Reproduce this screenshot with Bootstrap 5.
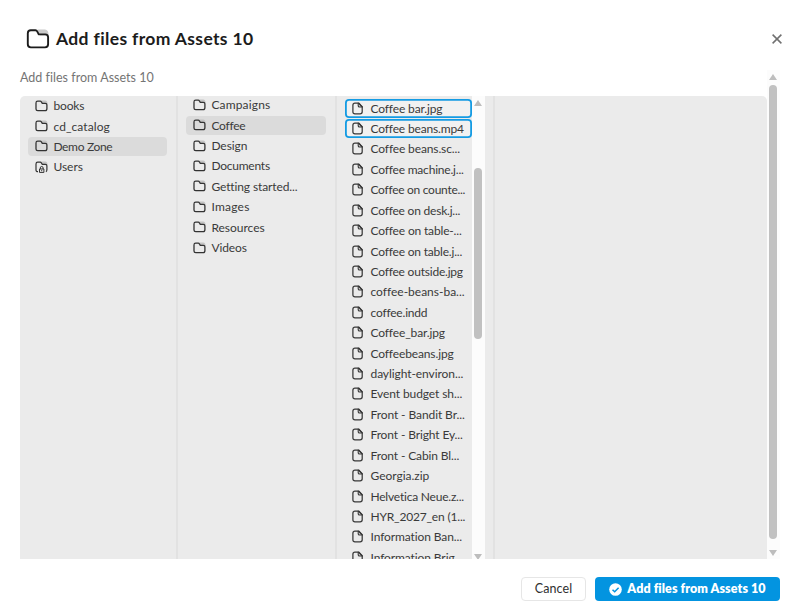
<!DOCTYPE html>
<html lang="en">
<head>
<meta charset="utf-8">
<meta name="viewport" content="width=device-width, initial-scale=1">
<title>Add files from Assets 10</title>
<link href="https://cdn.jsdelivr.net/npm/bootstrap@5.3.0/dist/css/bootstrap.min.css" rel="stylesheet">
<style>
body{font-family:Lato,"Open Sans",sans-serif;color:#3a3a3a;background:#fff;height:616px;overflow:hidden}
.dialog-head{height:70px;padding:8px 17px 0 26px}
.dialog-title{font-size:17.5px;font-weight:700;color:#1c1c1c;line-height:24px;letter-spacing:.36px;margin-left:6px}
.close-btn{width:12px;height:12px}
.dialog-body{height:489px;padding-left:20px}
.main-pane{width:747px}
.crumb{font-size:12.5px;line-height:16px;height:26px;color:#747474;letter-spacing:.02px}
.browser{height:463px;background:#ebebeb;border-radius:5px 5px 0 0}
.pane{border-right:2px solid #e2e2e2;flex:none}
.pane-a{width:158px;padding:0 9px 0 8px}
.pane-b{width:159px;padding:0 9px 0 8px}
.pane-c{width:157.5px}
.files{width:127px;margin-left:8px;padding-top:1.9px;height:463px}
.shift-a{margin-top:-.6px}
.shift-b{margin-top:-1.5px}
.entry{height:20.43px;padding:.7px 0}
.entry-in{height:19px;border-radius:4px;font-size:12px;line-height:19px;padding-left:6.8px}
.entry-in.chosen{background:#dbdbdb}
.entry-in svg{flex:none}
.entry-in span{margin-left:5.6px}
.files .entry-in{padding-left:7.4px}
.files .entry-in.marked{background:#f1f1f1;box-shadow:inset 0 0 0 1.8px #149be3}
.files .entry-in span{margin-left:7.1px}
.track{background:#fcfcfc;width:12.5px}
.thumb{width:8px;background:#c1c1c1;border-radius:4px}
.arrow-up,.arrow-down{width:0;height:0;border:4.5px solid transparent;border-top-width:0;border-bottom:6px solid #bdbdbd}
.arrow-down{border-top:6px solid #bdbdbd;border-bottom-width:0}
.col-track .arrow-up{margin-top:3.5px}
.col-track .thumb{height:171px;margin-top:62.500px}
.col-track .arrow-down{margin-bottom:-1px}
.page-track{padding:3.5px 0 3px}
.page-track .thumb{height:454px;margin-top:5.5px}
.dialog-foot{padding:18px 20.5px 0 0;gap:9px}
.dialog-foot .btn{height:24px;font-size:12.5px;line-height:14px;padding:0;border-radius:4px}
.btn-cancel{width:65px;border:1.5px solid #e6e6e6;color:#303030;background:#fff}
.dialog-foot .btn-cancel{letter-spacing:.1px}
.btn-add{width:184.5px;background:#0394e0;color:#fff;font-weight:800;border:0}
.dialog-foot .btn-add{letter-spacing:.08px}
.btn-add span{margin-left:5.5px}
</style>
<script src="https://cdn.jsdelivr.net/npm/bootstrap@5.3.0/dist/js/bootstrap.bundle.min.js"></script>
</head>
<body>
<svg class="d-none">
  <symbol id="folder" viewBox="0 0 13 12"><path d="M6.500.500h3.700q2.300 0 2.400 3.500H8z" fill="#c4c4c4"/><path d="M2.800 1.100h2.500q.7 0 1.100.8l.9 1.400h3q1.600 0 1.600 1.500v4q0 1.900-1.900 1.900H2.800Q1 10.700 1 8.900V2.900Q1 1.100 2.800 1.100z" fill="none" stroke="#333" stroke-width="1.300" stroke-linejoin="round"/></symbol>
  <symbol id="userfolder" viewBox="0 0 13 12"><path d="M6.500.500h3.700q2.300 0 2.400 3.500H8z" fill="#c4c4c4"/><path d="M3 10.700Q1 10.700 1 8.900V2.900Q1 1.100 2.800 1.100h2.500q.7 0 1.100.8l.9 1.400h3q1.600 0 1.600 1.500v4q0 1.500-1 1.900" fill="none" stroke="#333" stroke-width="1.200"/><path d="M5.300 8V6.900q0-1.400 1.400-1.400t1.400 1.400V8M4.500 8h4.400v3.400H4.500z" fill="none" stroke="#333" stroke-width="1" stroke-linejoin="round"/><circle cx="6.700" cy="9.700" r=".6" fill="#333"/></symbol>
  <symbol id="file" viewBox="0 0 11 13"><path d="M6.200 1.200v2.500q0 1.300 1.300 1.300h2.700L7 1.200z" fill="#d0d0d0" stroke="#383838" stroke-width="1.100"/><path d="M3 1.200h3.700l3.500 3.500v5q0 2.100-2.100 2.100H3Q.900 11.800.900 9.700V3.300Q.900 1.200 3 1.200z" fill="none" stroke="#383838" stroke-width="1.250" stroke-linejoin="round"/></symbol>
</svg>

<header class="dialog-head d-flex align-items-center justify-content-between">
  <div class="d-flex align-items-center">
    <svg width="24" height="20" viewBox="0 0 24 20"><path d="M11.500.500h7.500q3.600 0 3.600 6H14z" fill="#cacaca"/><path d="M4.800 1.200h4.700q1.100 0 1.700 1.200l1.300 2.500q.3.500.9.500h5.800q2.900 0 2.900 2.900v7q0 3.100-3.100 3.100H4.900q-3.100 0-3.100-3.100V4.200q0-3 3-3z" fill="none" stroke="#1c1c1c" stroke-width="1.900" stroke-linejoin="round"/></svg>
    <h1 class="dialog-title mb-0">Add files from Assets 10</h1>
  </div>
  <svg class="close-btn" viewBox="0 0 12 12" role="button" aria-label="Close"><path d="M1.600 1.600l8.800 8.800M10.400 1.600L1.600 10.400" stroke="#707070" stroke-width="1.500"/></svg>
</header>

<main class="dialog-body d-flex">
  <div class="main-pane">
    <div class="crumb">Add files from Assets 10</div>
    <div class="browser d-flex overflow-hidden">
      <div class="pane pane-a"><div class="shift-a" id="roots"></div></div>
      <div class="pane pane-b"><div class="shift-b" id="folders"></div></div>
      <div class="pane pane-c d-flex">
        <div class="files overflow-hidden" id="files"></div>
        <div class="track col-track d-flex flex-column align-items-center"><div class="arrow-up"></div><div class="thumb"></div><div class="arrow-down mt-auto"></div></div>
      </div>
    </div>
  </div>
  <div class="track page-track d-flex flex-column align-items-center"><div class="arrow-up"></div><div class="thumb"></div><div class="arrow-down mt-auto"></div></div>
</main>

<footer class="dialog-foot d-flex justify-content-end">
  <button class="btn btn-cancel">Cancel</button>
  <button class="btn btn-add d-flex align-items-center justify-content-center">
    <svg width="13" height="13" viewBox="0 0 13 13"><circle cx="6.500" cy="6.500" r="6.300" fill="#fff"/><path d="M3.500 6.700l2.200 2.100 3.900-4" fill="none" stroke="#0394e0" stroke-width="1.500"/></svg>
    <span>Add files from Assets 10</span>
  </button>
</footer>

<script>
// Each entry is [label, label width in px]; tracking is adjusted so the label fills its width.
function fill(id, entries, icon, state) {
  var list = document.getElementById(id);
  list.innerHTML = entries.map(function (entry, i) {
    var kind = entry[0] === 'Users' ? 'userfolder' : icon;
    return '<div class="entry"><div class="entry-in d-flex align-items-center text-nowrap ' + (state[i] || '') + '">' +
      '<svg width="' + (icon === 'file' ? 11 : 13) + '" height="' + (icon === 'file' ? 13 : 12) + '"><use href="#' + kind + '"/></svg><span>' + entry[0] + '</span></div></div>';
  }).join('');
  list.querySelectorAll('span').forEach(function (label, i) {
    var gap = entries[i][1] - label.getBoundingClientRect().width;
    label.style.letterSpacing = (gap / entries[i][0].length).toFixed(3) + 'px';
  });
}
fill('roots', [['books', 31], ['cd_catalog', 56.5], ['Demo Zone', 59], ['Users', 29.5]], 'folder', {2: 'chosen'});
fill('folders', [['Campaigns', 59], ['Coffee', 33.5], ['Design', 36], ['Documents', 58.500], ['Getting started...', 85.7], ['Images', 38.2], ['Resources', 53.3], ['Videos', 35.5]], 'folder', {1: 'chosen'});
fill('files', [['Coffee bar.jpg', 71.5], ['Coffee beans.mp4', 93], ['Coffee beans.sc...', 89], ['Coffee machine.j...', 92.8], ['Coffee on counte...', 94.2], ['Coffee on desk.j...', 89.3], ['Coffee on table-...', 90.7], ['Coffee on table.j...', 91.2], ['Coffee outside.jpg', 92], ['coffee-beans-ba...', 93.7], ['coffee.indd', 56.5], ['Coffee_bar.jpg', 74], ['Coffeebeans.jpg', 82.7], ['daylight-environ...', 92.7], ['Event budget sh...', 91.7], ['Front - Bandit Br...', 94.2], ['Front - Bright Ey...', 92.2], ['Front - Cabin Bl...', 88.7], ['Georgia.zip', 58.7], ['Helvetica Neue.z...', 93.7], ['HYR_2027_en (1...', 94.7], ['Information Ban...', 91.7], ['Information Brig...', 92.5]], 'file', {0: 'marked', 1: 'marked'});
</script>
</body>
</html>
